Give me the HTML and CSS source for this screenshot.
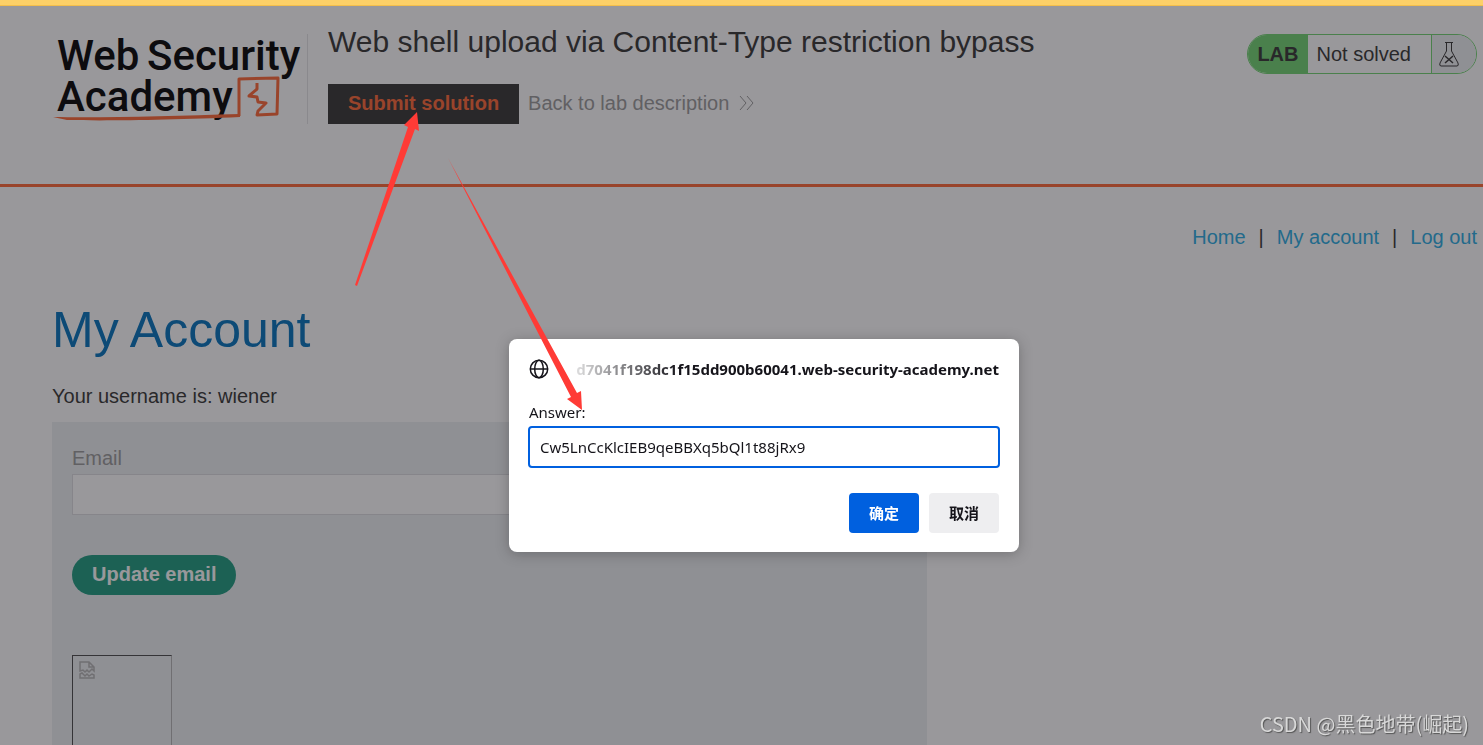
FILE: index.html
```html
<!DOCTYPE html>
<html lang="en">
<head>
  <meta charset="UTF-8" />
  <meta name="viewport" content="width=device-width, initial-scale=1.0"/>
  <title>Web shell upload via Content-Type restriction bypass</title>
  <link rel="stylesheet" href="styles.css">
</head>
<body>

  <div class="top-bar"></div>

  <!-- Lab header -->
  <header class="lab-header">
    <a href="#" class="logo" aria-label="Web Security Academy">
      <svg width="254" height="90" viewBox="0 0 254 90">
        <text x="4" y="36">Web</text>
        <text x="94" y="36">Security</text>
        <text x="4" y="77">Academy</text>
        <path class="line" d="M0 83 C50 84 120 82 187 80 L187 83 C120 86 50 87 14 86z" />
        <path class="mark" d="M186 82 L186 45 L225 44 L224 80 L204 81 L205 77 L213 69 L205 68 L204 63 L196 62 L204 55 L204 49" />
      </svg>
    </a>
    <div class="title-box">
      <h2>Web shell upload via Content-Type restriction bypass</h2>
      <div class="title-links">
        <button type="button" class="submit-btn">Submit solution</button>
        <a href="#" class="back-link">Back to lab description
          <svg width="15" height="16" viewBox="0 0 15 16"><path d="M1 1l6 7-6 7M8 1l6 7-6 7" /></svg>
        </a>
      </div>
    </div>
    <div class="lab-status">
      <span class="lab-tag">LAB</span>
      <span class="lab-text">Not solved</span>
      <span class="lab-icon">
        <svg width="20" height="26" viewBox="0 0 20 26">
          <path d="M6 1.500h8M7.500 2v8L1 22q-1 3 1 3h16q2 0 1-3L12.500 10V2" />
          <path class="cross" d="M6 15l8 7M14 15l-8 7" />
        </svg>
      </span>
    </div>
  </header>

  <!-- Account page -->
  <main class="container">
    <nav class="top-links">
      <a href="#">Home</a><span>|</span>
      <a href="#">My account</a><span>|</span>
      <a href="#">Log out</a>
    </nav>
    <h1>My Account</h1>
    <p>Your username is: wiener</p>
    <form class="account-form">
      <label for="email">Email</label>
      <input type="email" id="email">
      <button type="button" class="update-btn">Update email</button>
      <div class="avatar">
        <svg width="16" height="18" viewBox="0 0 16 18">
          <path d="M1 10V1h9l5 5v4l-2-2-3 3-2-2-2 2-2-2zM10 1v5h5M1 17v-4l2-1 3 3 2-2 2 2 3-2 2 1v3z" />
        </svg>
      </div>
    </form>
  </main>

  <!-- Answer prompt -->
  <div class="overlay">
    <div class="dialog" role="dialog" aria-labelledby="origin">
      <div class="dialog-head">
        <svg width="20" height="20" viewBox="0 0 20 20">
          <circle cx="10" cy="10" r="8.700" />
          <ellipse cx="10" cy="10" rx="4.300" ry="8.700" />
          <path d="M1.500 10h17" />
        </svg>
        <div class="origin" id="origin"><span>d7041f198dc1f15dd900b60041.web-security-academy.net</span></div>
      </div>
      <label for="answer">Answer:</label>
      <input type="text" id="answer" value="Cw5LnCcKlcIEB9qeBBXq5bQl1t88jRx9">
      <div class="dialog-buttons">
        <button type="button" class="ok-btn">确定</button>
        <button type="button">取消</button>
      </div>
    </div>
  </div>

  <!-- Arrows drawn over the page -->
  <svg class="arrows" width="600" height="420" viewBox="0 0 600 420">
    <path d="M355 285 L408 127 L404 125 L417 112 L419 131 L415 129 L357 286z" />
    <path d="M448 158 L577 393 L581 391 L582 410 L567 399 L571 397z" />
  </svg>

  <div class="watermark">CSDN @黑色地带(崛起)</div>

</body>
</html>
```
FILE: styles.css
```css
* {
  box-sizing: border-box;
}

html, body {
  height: 100%;
  margin: 0;
  overflow: hidden;
}

body {
  font-family: "Liberation Sans", Arial, sans-serif;
  font-size: 20px;
  line-height: 24px;
  background: #fff;
  color: #333332;
}

a {
  text-decoration: none;
}

button, input {
  font-family: inherit;
  font-size: inherit;
}

button {
  height: 40px;
  border: none;
  padding: 0 20px 2px;
  font-weight: bold;
  cursor: pointer;
}

svg {
  fill: none;
  stroke: currentColor;
}

.top-bar {
  height: 6px;
  background: #fcd068;
  border-bottom: 1px solid #f3be4c;
}

/* Header */
.lab-header {
  display: flex;
  align-items: flex-start;
  height: 181px;
  padding: 28px 6px 0 53px;
  border-bottom: 3px solid #ff6633;
}

.logo {
  display: flex;
  border-right: 1px solid #e3e3e6;
}

.logo text {
  font-family: Roboto, sans-serif;
  font-size: 42px;
  font-weight: 500;
  fill: #000;
  stroke: none;
}

.logo .line {
  fill: #ff6633;
  stroke: none;
}

.logo .mark {
  stroke: #ff6633;
  stroke-width: 3;
  stroke-linejoin: round;
}

.title-box {
  flex: 1;
  margin-left: 20px;
}

.title-box h2 {
  margin: -10px 0 24px;
  font-size: 30px;
  line-height: 36px;
  font-weight: normal;
}

.title-links {
  display: flex;
  align-items: center;
  gap: 9px;
}

.submit-btn {
  background: #333332;
  color: #ff6633;
}

.back-link {
  display: flex;
  align-items: center;
  gap: 10px;
  padding-bottom: 2px;
  color: #999;
}

.lab-status {
  display: flex;
  height: 40px;
  line-height: 38px;
  border: 1px solid #6fd46f;
  border-radius: 20px;
  overflow: hidden;
}

.lab-tag {
  padding: 0 9px;
  background: #6fd46f;
  font-weight: bold;
}

.lab-text {
  padding: 0 20px 0 9px;
}

.lab-icon {
  display: flex;
  align-items: center;
  padding: 0 17px 0 7px;
  border-left: 1px solid #6fd46f;
  background: #edf0f2;
}

.lab-icon .cross {
  stroke-width: 1.5;
}

/* Account */
.container {
  padding: 38px 6px 0 52px;
}

.top-links {
  display: flex;
  justify-content: flex-end;
  gap: 13px;
}

.top-links a {
  color: #29abe2;
}

h1 {
  margin: 51px 0 24px;
  font-size: 50px;
  line-height: 60px;
  font-weight: normal;
  color: #0071bc;
}

p {
  margin: 0 0 14px;
}

.account-form {
  width: 62%;
  max-width: 875px;
  padding: 24px 20px 60px;
  background: #edf0f2;
}

.account-form label {
  display: block;
  margin-bottom: 4px;
  color: #999;
}

.account-form input {
  display: block;
  width: 100%;
  height: 41px;
  padding: 0 10px;
  border: 1px solid #dcdde0;
}

.update-btn {
  display: block;
  margin: 40px 0 60px;
  border-radius: 20px;
  background: #1c9b7f;
  color: #fff;
}

.avatar {
  width: 100px;
  height: 100px;
  padding: 4px 6px;
  border: 1px solid;
  border-color: #4a4a4a #b4b4b4 #b4b4b4 #4a4a4a;
  color: #b4b4b4;
}

.avatar svg {
  stroke-width: 1.5;
}

/* Prompt */
.overlay {
  position: fixed;
  top: 6px;
  right: 0;
  bottom: 0;
  left: 0;
  display: flex;
  justify-content: center;
  align-items: flex-start;
  padding: 333px 0 0 45px;
  background: rgba(28, 27, 34, 0.45);
}

.dialog {
  width: 510px;
  padding: 19px;
  border-radius: 8px;
  background: #fff;
  box-shadow: 0 2px 14px rgba(0, 0, 0, 0.25);
  color: #15141a;
  font-family: "Noto Sans", "Noto Sans CJK SC", sans-serif;
  font-size: 15px;
  line-height: 22px;
}

.dialog-head {
  display: flex;
  align-items: center;
  gap: 10px;
  margin: 0 1px 21px;
}

.dialog-head svg {
  flex: none;
  stroke-width: 1.5;
}

.origin {
  display: flex;
  flex: 1;
  min-width: 0;
  justify-content: flex-end;
  overflow: hidden;
  white-space: nowrap;
  font-weight: bold;
  -webkit-mask-image: linear-gradient(to right, transparent, #000 120px);
  mask-image: linear-gradient(to right, transparent, #000 120px);
}

.dialog label {
  display: block;
  margin: 0 1px 3px;
}

.dialog input {
  display: block;
  width: 100%;
  height: 42px;
  padding: 0 10px;
  border: 2px solid #0060df;
  border-radius: 4px;
  color: #15141a;
  outline: none;
}

.dialog-buttons {
  display: flex;
  justify-content: flex-end;
  gap: 10px;
  margin: 25px 1px 0;
}

.dialog-buttons button {
  border-radius: 4px;
  background: #eeeef0;
  color: #15141a;
}

.dialog-buttons .ok-btn {
  background: #0060df;
  color: #fff;
}

.arrows {
  position: absolute;
  top: 0;
  left: 0;
  fill: #ff3b36;
  stroke: none;
  pointer-events: none;
}

.watermark {
  position: fixed;
  right: 14px;
  bottom: 9px;
  color: #d8d8d8;
  font-family: "Noto Sans CJK SC", sans-serif;
  text-shadow: 1px 1px 1px #555;
}
```
